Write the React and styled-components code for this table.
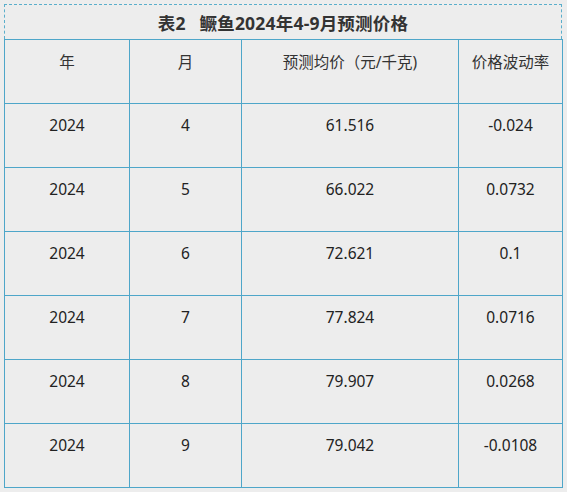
import React from "react";
import styled, { createGlobalStyle } from "styled-components";

const Global = createGlobalStyle`
  html, body {
    margin: 0;
    background: #ededed;
  }
  body {
    font-family: "Noto Sans", "Noto Sans CJK SC", sans-serif;
    color: #222;
  }
`;

const Page = styled.div`
  padding: 4px 0 0 4px;
  width: 558px;
`;

const Caption = styled.div`
  height: 35px;
  box-sizing: border-box;
  border: 1px dashed #5aaecb;
  border-bottom: none;
  display: flex;
  align-items: center;
  justify-content: center;
  font-size: 17.5px;
  font-weight: bold;
  color: #333;
  letter-spacing: 0.2px;
  word-spacing: 9px;
`;

const Table = styled.table`
  width: 558px;
  border-collapse: collapse;
  table-layout: fixed;
`;

const Cell = styled.td`
  border: 1px solid #4ea6c9;
  height: 64px;
  box-sizing: border-box;
  vertical-align: top;
  text-align: center;
  padding: 10px 4px 0;
  font-size: 15.5px;
  color: ${props => (props.head ? "#333" : "#222")};
`;

const widths = [125, 112, 217, 104];
const head = ["年", "月", "预测均价（元/千克)", "价格波动率"];
const rows = [
  ["2024", "4", "61.516", "-0.024"],
  ["2024", "5", "66.022", "0.0732"],
  ["2024", "6", "72.621", "0.1"],
  ["2024", "7", "77.824", "0.0716"],
  ["2024", "8", "79.907", "0.0268"],
  ["2024", "9", "79.042", "-0.0108"],
];

export default function App() {
  return (
    <Page>
      <Global />
      <Caption>表2 鳜鱼2024年4-9月预测价格</Caption>
      <Table>
        <colgroup>
          {widths.map((w, i) => (
            <col key={i} style={{ width: w }} />
          ))}
        </colgroup>
        <tbody>
          <tr>
            {head.map((h, i) => (
              <Cell head key={i}>{h}</Cell>
            ))}
          </tr>
          {rows.map((r, i) => (
            <tr key={i}>
              {r.map((v, j) => (
                <Cell key={j}>{v}</Cell>
              ))}
            </tr>
          ))}
        </tbody>
      </Table>
    </Page>
  );
}
